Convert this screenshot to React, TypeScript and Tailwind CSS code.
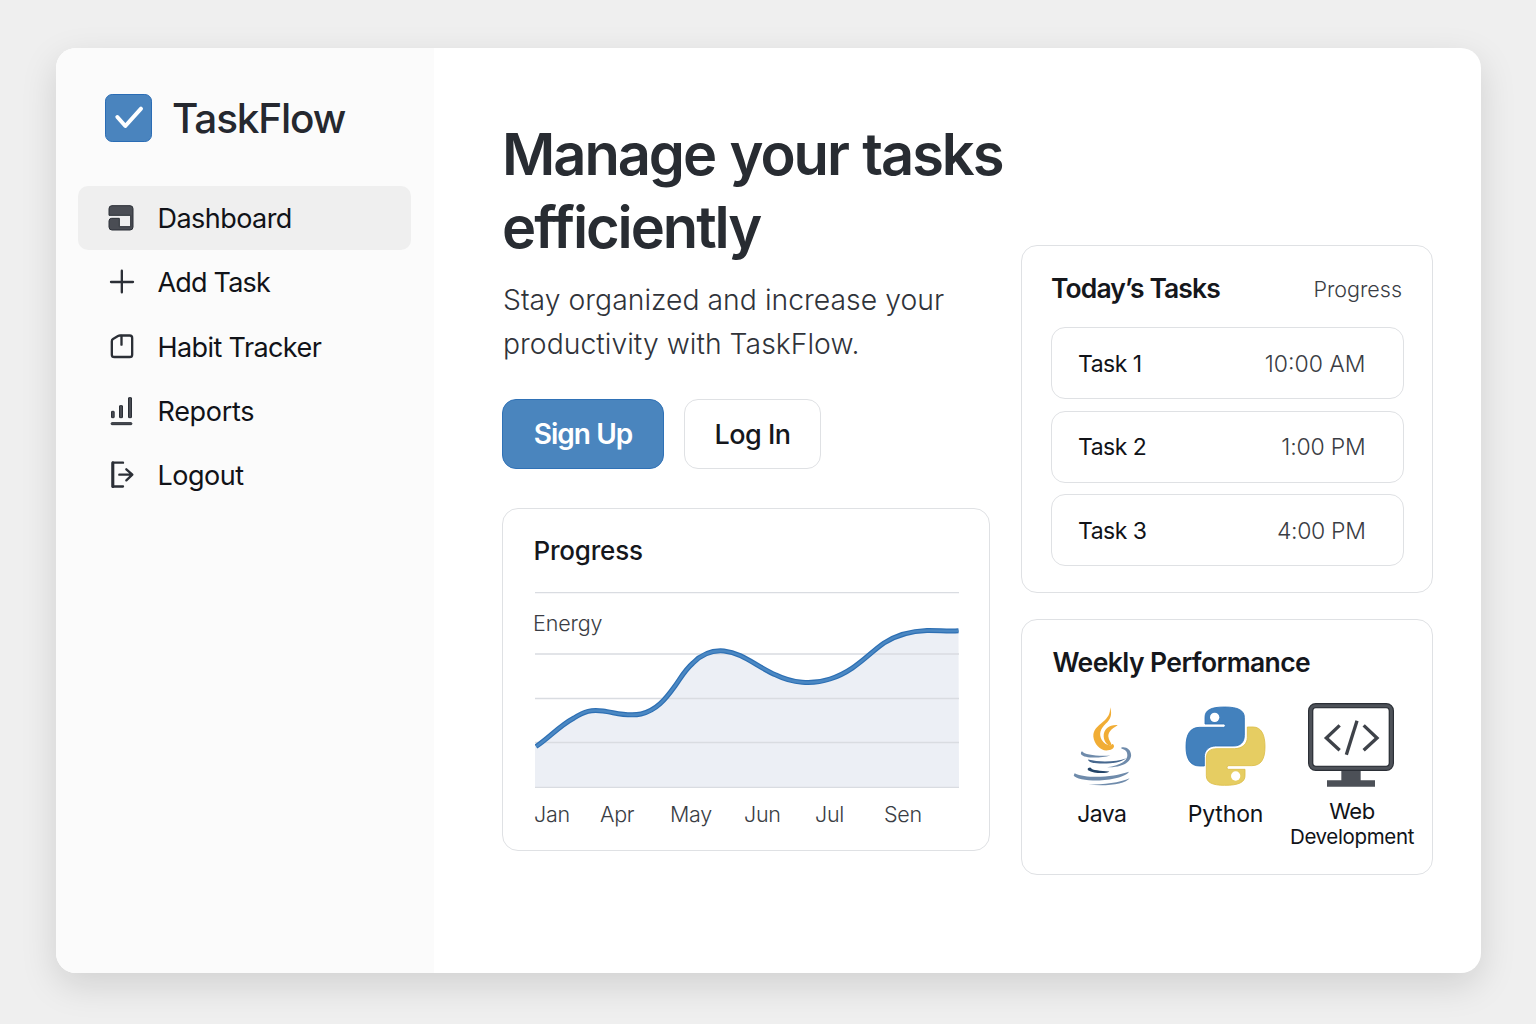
import type { ReactNode } from "react";

const INK = "#2b2f36";

function DashboardIcon() {
  return (
    <svg viewBox="111 368 90 90" className="size-[30px] shrink-0">
      <path
        d="M126 376 H180 Q189 376 189 385 V440 Q189 449 180 449 H126 Q117 449 117 440 V422 Q117 414 125 414 H148 V439 H182 V405 H117 V385 Q117 376 126 376 Z"
        fill="#4a4d54"
        stroke={INK}
        strokeWidth="3"
        strokeLinejoin="round"
      />
    </svg>
  );
}

function AddIcon() {
  return (
    <svg viewBox="51 37 90 90" className="size-[30px] shrink-0" stroke={INK} strokeWidth="7" strokeLinecap="round">
      <path d="M63 82 H129 M95.500 48 V113" />
    </svg>
  );
}

function HabitIcon() {
  return (
    <svg viewBox="51 229 90 90" className="size-[30px] shrink-0" fill="none" stroke={INK} strokeWidth="7" strokeLinecap="round" strokeLinejoin="round">
      <path d="M90 242.500 H119 Q126.500 242.500 126.500 250 V300 Q126.500 307 119 307 H73 Q65.500 307 65.500 300 V260 Q65.500 255 69 253 L84 244 Q87 242.500 90 242.500 Z" />
      <path d="M94.500 244 V270" />
    </svg>
  );
}

function ReportsIcon() {
  return (
    <svg viewBox="51 423 90 90" className="size-[30px] shrink-0" fill="#4a4d54" stroke={INK} strokeWidth="3">
      <rect x="64.500" y="469" width="8" height="19" rx="1" />
      <rect x="88.500" y="452" width="9" height="36" rx="1" />
      <rect x="115.500" y="428" width="9" height="60" rx="1" />
      <rect x="63.500" y="503" width="62" height="6" rx="2" />
    </svg>
  );
}

function LogoutIcon() {
  return (
    <svg viewBox="51 615 90 90" className="size-[30px] shrink-0" fill="none" stroke={INK} strokeWidth="7" strokeLinecap="round" strokeLinejoin="round">
      <path d="M99 623 H68.500 V694.500 H99" />
      <path d="M88 659 H126 M109 643 L127 659 L109 676" />
      <path d="M68.500 623 V694.500" strokeWidth="9" />
    </svg>
  );
}

function JavaLogo() {
  return (
    <svg viewBox="35 33 180 242" className="ml-[1.500px] h-[81px] w-[60px]">
      <path
        d="M149 36 C157 60 150 72 136 86 C120 102 115 116 124 134 C131 146 142 152 152 150 C158 147 157 144 161 152 C162 160 152 166 138 166 C120 166 101 146 99 124 C98 104 112 94 128 80 C144 65 150 56 149 36 Z"
        fill="#f1ad35"
      />
      <path
        d="M172 90 C152 102 144 110 144 124 C145 136 153 142 154 150 C147 154 132 146 130 124 C129 102 148 88 172 90 Z"
        fill="#f1ad35"
      />
      <g fill="#6f8bab">
        <path d="M65 168 C72 178 110 184 150 181 C118 190 72 190 62 177 C61 172 63 169 65 168 Z" />
        <path d="M83 193 C120 202 168 200 198 189 C182 202 150 206 118 205 C100 204 84 202 83 193 Z" fill="#47688f" />
        <path d="M183 157 C199 153 215 166 212 184 C208 204 180 218 140 216 C176 212 201 198 201 180 C201 168 194 163 183 160 Z" />
        <path d="M43 234 C80 252 160 246 206 230 C196 246 150 256 110 256 C76 256 44 250 40 241 Z" />
        <path d="M84 268 C130 268 180 262 208 249 C196 266 140 274 84 268 Z" />
      </g>
      <path d="M90 217 C96 227 120 226 147 229 C140 236 100 236 83 225 C80 220 84 218 90 217 Z" fill="#234468" />
    </svg>
  );
}

function PythonLogo() {
  return (
    <svg viewBox="44 34 243 243" className="size-[81px]">
      <path
        d="M102 214 H88 C58 214 47 190 47 156 C47 118 60 98 88 98 H160 Q165 97 165 93 Q165 88 160 88 H104 V68 C104 46 122 37 163 37 C205 37 222 48 222 68 V122 C222 143 210 154 190 154 H136 C115 154 102 168 102 186 Z"
        fill="#4381bd"
        stroke="#2b70b5"
        strokeWidth="2.500"
      />
      <circle cx="133" cy="68" r="14" fill="#fff" />
      <path
        d="M231 97 H248 C273 97 284 120 284 156 C284 194 272 213 244 213 H175 Q170 214 170 219 Q170 224 175 224 H224 V243 C224 263 205 272 163 272 C125 272 108 263 108 243 V190 C108 170 120 162 140 162 H192 C215 162 231 148 231 128 Z"
        fill="#e6cd62"
        stroke="#dcbd48"
        strokeWidth="2.500"
      />
      <circle cx="196" cy="244" r="14" fill="#fff" />
    </svg>
  );
}

function MonitorIcon() {
  return (
    <svg viewBox="84 38 258 252" className="h-[84px] w-[86px]" fill="none">
      <path d="M184 238 H242 V270 H285 V289 H141 V270 H184 Z" fill="#4c5057" />
      <rect x="92" y="46" width="242" height="188" rx="15" stroke={INK} strokeWidth="16" />
      <rect x="92" y="46" width="242" height="188" rx="15" stroke="#4e5259" strokeWidth="9" />
      <g stroke="#3e4249" strokeWidth="10">
        <path d="M179 105 L139 143 L179 180" />
        <path d="M251 105 L291 143 L251 180" />
        <path d="M231 91 L199 193" />
      </g>
    </svg>
  );
}

const navItems: { label: string; icon: ReactNode; text: string; active?: boolean }[] = [
  { label: "Dashboard", icon: <DashboardIcon />, text: "pt-[2px] tracking-[-0.55px]", active: true },
  { label: "Add Task", icon: <AddIcon />, text: "tracking-[-0.8px]" },
  { label: "Habit Tracker", icon: <HabitIcon />, text: "pt-[2px] tracking-[-0.6px]" },
  { label: "Reports", icon: <ReportsIcon />, text: "pt-[2px] tracking-[-0.3px]" },
  { label: "Logout", icon: <LogoutIcon />, text: "tracking-[-0.5px]" },
];

function Sidebar() {
  return (
    <aside className="w-[378px] shrink-0 bg-[#fbfbfb] pl-[22px] pt-[46px]">
      <div className="flex h-12 items-center gap-5 pl-[27px]">
        <svg viewBox="105 42 141 144" className="h-12 w-[47px]">
          <rect x="106.500" y="43.500" width="138" height="141" rx="20" fill="#4a84be" stroke="#2a6cb4" strokeWidth="3" />
          <path d="M142 111 L166 138 L213 86" fill="none" stroke="#fff" strokeWidth="12" strokeLinecap="round" strokeLinejoin="round" />
        </svg>
        <span className="pt-[2px] text-[40.500px] font-medium leading-none tracking-[-1.150px] text-[#25282f]">TaskFlow</span>
      </div>
      <nav className="mt-[43.500px] flex w-[333px] flex-col">
        {navItems.map((item) => (
          <a
            key={item.label}
            className={
              item.active
                ? "flex h-[64.400px] items-center rounded-[10px] bg-[#efefef] pl-[29px]"
                : "flex h-[64.400px] items-center pl-[29px]"
            }
          >
            {item.icon}
            <span className={`ml-[20.500px] text-[27px] leading-none text-[#111318] ${item.text}`}>{item.label}</span>
          </a>
        ))}
      </nav>
    </aside>
  );
}

const curve =
  "M1 154.500 C14 146 24 134 39 126 C50 119 56 117.500 68 119 C80 120.500 92 125 106 122 C121 118.500 130 108 140 94 C147 84 150 78 158 71 C167 62 178 58 189 59 C208 61 222 75 241 83 C257 91 277 93 295 87 C320 79 333 62 349 51 C363 42 377 39 392 38.500 C404 38.300 412 39.500 423.500 38.800";

const months = [
  { name: "Jan", width: "w-[66px]" },
  { name: "Apr", width: "w-[70px]" },
  { name: "May", width: "w-[74px]" },
  { name: "Jun", width: "w-[71px]" },
  { name: "Jul", width: "w-[69px]" },
  { name: "Sen", width: "w-[60px]" },
];

function ProgressCard() {
  return (
    <section className="mt-[39px] h-[343px] w-[488px] rounded-2xl border border-[#dfe1e4] pl-8 pt-[26px]">
      <h2 className="ml-[-1.500px] text-[26px] font-medium leading-8 tracking-[-0.200px] text-[#15171c]">Progress</h2>
      <div className="relative mt-[25px] h-[196px] w-[424px]">
        <svg viewBox="0 0 424 196" className="block h-[196px] w-[424px]">
          <path d={`${curve} L424 195.500 L0 195.500 L0 154.500 Z`} fill="#eceff5" />
          <g stroke="#d9dce1" strokeWidth="1.300">
            <path d="M0 0.700 H424 M0 62 H424 M0 106.500 H424 M0 150.500 H424 M0 195.300 H424" />
          </g>
          <path d={curve} fill="none" stroke="#2d6fb3" strokeWidth="5" />
          <path d={curve} fill="none" stroke="#4b88c3" strokeWidth="2.600" />
        </svg>
        <span className="absolute left-[-2px] top-[19.500px] text-[21.500px] font-light leading-6 tracking-[-0.150px] text-[#3a3d44]">Energy</span>
      </div>
      <div className="ml-[-1px] mt-[14px] flex text-[21.500px] font-light leading-6 tracking-[-0.300px] text-[#3a3d44]">
        {months.map((m) => (
          <span key={m.name} className={m.width}>
            {m.name}
          </span>
        ))}
      </div>
    </section>
  );
}

const tasks = [
  { name: "Task 1", time: "10:00 AM", tracking: "tracking-normal" },
  { name: "Task 2", time: "1:00 PM", tracking: "tracking-[-0.200px]" },
  { name: "Task 3", time: "4:00 PM", tracking: "tracking-[-0.350px]" },
];

function TasksCard() {
  return (
    <section className="h-[348px] rounded-2xl border border-[#dfe1e4] px-[29px] pt-[26px]">
      <div className="flex h-8 items-center justify-between">
        <h2 className="text-[26.500px] font-semibold leading-8 tracking-[-0.900px] text-[#15171c]">Today’s Tasks</h2>
        <span className="mr-px mt-[4px] text-[21.500px] font-light text-[#3a3d44]">Progress</span>
      </div>
      <ul className="mt-[23.500px] flex flex-col gap-[11.500px]">
        {tasks.map((t) => (
          <li key={t.name} className="-mr-px flex h-[72px] items-center justify-between rounded-[14px] border border-[#dfe1e4] pl-[26px] pr-[37.500px] pt-[2px]">
            <span className="text-[23px] tracking-[-0.500px] text-[#111318]">{t.name}</span>
            <span className={`text-[23px] font-light text-[#3a3d44] ${t.tracking}`}>{t.time}</span>
          </li>
        ))}
      </ul>
    </section>
  );
}

function PerformanceCard() {
  return (
    <section className="mt-[26.500px] h-[256px] rounded-2xl border border-[#dfe1e4] pl-[31px] pt-[26px]">
      <h2 className="ml-[-0.500px] text-[26.500px] font-semibold leading-8 tracking-[-0.580px] text-[#15171c]">Weekly Performance</h2>
      <div className="ml-[-13.500px] mt-[25px] flex text-[#111318]">
        <div className="flex w-[123.500px] flex-col items-center pt-[3px]">
          <JavaLogo />
          <span className="ml-px mt-[13px] text-[23px] leading-7 tracking-[-0.600px]">Java</span>
        </div>
        <div className="flex w-[124px] flex-col items-center pt-[3px]">
          <PythonLogo />
          <span className="ml-px mt-[13px] text-[23px] leading-7 tracking-[-0.150px]">Python</span>
        </div>
        <div className="flex w-[128px] flex-col items-center">
          <MonitorIcon />
          <span className="ml-[2px] mt-[11px] text-[22px] leading-[26px] tracking-[-0.500px]">Web</span>
          <span className="ml-[2px] text-[20.500px] leading-[26px] tracking-[-0.350px]">Development</span>
        </div>
      </div>
    </section>
  );
}

export default function App() {
  return (
    <div className="h-[1024px] w-[1536px] overflow-hidden bg-[#efefef] pl-[56px] pt-12 font-['Inter',sans-serif]">
      <div className="flex h-[925px] w-[1425px] overflow-hidden rounded-[20px] bg-white shadow-[0_12px_36px_rgba(0,0,0,0.13)]">
        <Sidebar />
        <main className="flex pl-[68px]">
          <div className="w-[488px] pt-[70px]">
            <h1 className="whitespace-nowrap text-[57.800px] font-[560] leading-[73px] tracking-[-2.050px] text-[#282c32] [word-spacing:2px]">
              Manage your tasks
              <br />
              efficiently
            </h1>
            <p className="ml-px mt-[14.200px] whitespace-nowrap text-[28.300px] font-light leading-[44px] tracking-[0.040px] text-[#30333a]">
              Stay organized and increase your
              <br />
              productivity with TaskFlow.
            </p>
            <div className="mt-[32.800px] flex gap-5">
              <button className="h-[70px] w-[162px] rounded-[14px] border border-[#2f71b6] bg-[#4a85be] text-[28px] font-semibold tracking-[-0.950px] text-white">
                Sign Up
              </button>
              <button className="h-[70px] w-[137px] rounded-[14px] border border-[#dfe1e4] bg-white pt-[2px] text-[27px] font-medium tracking-[-0.550px] text-[#15171c]">
                Log In
              </button>
            </div>
            <ProgressCard />
          </div>
          <div className="ml-[31px] w-[412px] pt-[196.500px]">
            <TasksCard />
            <PerformanceCard />
          </div>
        </main>
      </div>
    </div>
  );
}
